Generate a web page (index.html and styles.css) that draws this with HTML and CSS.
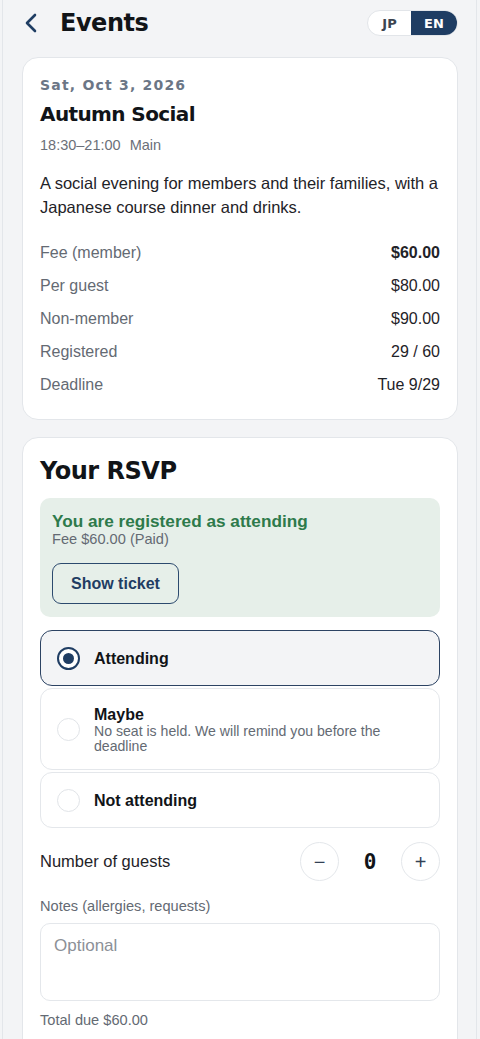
FILE: index.html
```html
<!DOCTYPE html>
<html lang="en">
<head>
  <meta charset="UTF-8" />
  <meta name="viewport" content="width=device-width, initial-scale=1.0" />
  <title>Events</title>
  <link rel="stylesheet" href="styles.css">
</head>
<body>
  <div class="app">
    <header class="header">
      <a class="back" href="#" aria-label="Back">
        <svg width="14" height="20" viewBox="0 0 14 20"><path d="M11 2 L3 10 L11 18" fill="none" stroke="#1f3d63" stroke-width="2.6" stroke-linecap="round" stroke-linejoin="round"/></svg>
      </a>
      <h1 class="page-title">Events</h1>
      <div class="lang">
        <button class="lang-btn">JP</button>
        <button class="lang-btn active">EN</button>
      </div>
    </header>

    <section class="card event">
      <div class="event-date">Sat, Oct 3, 2026</div>
      <h2 class="event-title">Autumn Social</h2>
      <div class="event-meta">18:30–21:00<span class="venue">Main</span></div>
      <p class="event-desc">A social evening for members and their families, with a Japanese course dinner and drinks.</p>
      <dl class="facts">
        <div class="fact"><dt>Fee (member)</dt><dd class="strong">$60.00</dd></div>
        <div class="fact"><dt>Per guest</dt><dd>$80.00</dd></div>
        <div class="fact"><dt>Non-member</dt><dd>$90.00</dd></div>
        <div class="fact"><dt>Registered</dt><dd>29 / 60</dd></div>
        <div class="fact"><dt>Deadline</dt><dd>Tue 9/29</dd></div>
      </dl>
    </section>

    <section class="card rsvp">
      <h2 class="rsvp-title">Your RSVP</h2>

      <div class="status">
        <div class="status-title">You are registered as attending</div>
        <div class="status-fee">Fee $60.00 (Paid)</div>
        <button class="ticket-btn">Show ticket</button>
      </div>

      <div class="options">
        <label class="option selected">
          <span class="radio"></span>
          <span class="option-text"><span class="option-name">Attending</span></span>
        </label>
        <label class="option">
          <span class="radio"></span>
          <span class="option-text">
            <span class="option-name">Maybe</span>
            <span class="option-note">No seat is held. We will remind you before the deadline</span>
          </span>
        </label>
        <label class="option">
          <span class="radio"></span>
          <span class="option-text"><span class="option-name">Not attending</span></span>
        </label>
      </div>

      <div class="guests">
        <span class="guests-label">Number of guests</span>
        <div class="stepper">
          <button class="step">−</button>
          <span class="step-value">0</span>
          <button class="step">+</button>
        </div>
      </div>

      <label class="notes-label" for="notes">Notes (allergies, requests)</label>
      <textarea id="notes" class="notes" placeholder="Optional"></textarea>

      <div class="total">Total due $60.00</div>
    </section>
  </div>
</body>
</html>
```

FILE: styles.css
```css
* {
  box-sizing: border-box;
}
body {
  margin: 0;
  padding: 0;
  background: #f3f4f6;
  font-family: "Liberation Sans", Arial, sans-serif;
  color: #1f2328;
}
.app {
  margin: 0 3px 0 2px;
  padding: 0 18px 40px 19px;
  border-left: 1px solid #e3e6ea;
  border-right: 1px solid #e3e6ea;
  min-height: 1039px;
}
.header {
  height: 46px;
  display: flex;
  align-items: center;
  margin-bottom: 11px;
}
.back {
  display: flex;
  width: 14px;
  margin-left: 2px;
}
.page-title {
  margin: 0 0 0 22px;
  font-family: "DejaVu Sans", sans-serif;
  font-size: 24px;
  letter-spacing: -0.02em;
  font-weight: 700;
  color: #111418;
  flex: 1;
}
.lang {
  display: flex;
  height: 26px;
  border: 1px solid #e2e5e9;
  border-radius: 999px;
  overflow: hidden;
  background: #fff;
}
.lang-btn {
  border: none;
  background: none;
  font-family: "DejaVu Sans", sans-serif;
  font-weight: 700;
  font-size: 13px;
  color: #3d4450;
  width: 43px;
  padding: 0;
}
.lang-btn.active {
  background: #1f3d63;
  color: #fff;
  width: 46px;
}
.card {
  background: #fff;
  border: 1px solid #e3e6ea;
  border-radius: 16px;
}
.event {
  padding: 19px 17px 18px;
  margin-bottom: 17px;
}
.event-date {
  font-family: "DejaVu Sans", sans-serif;
  font-weight: 700;
  font-size: 14px;
  line-height: 17px;
  letter-spacing: 1.2px;
  color: #6b7686;
}
.event-title {
  margin: 8px 0 0;
  font-family: "DejaVu Sans", sans-serif;
  font-size: 20px;
  line-height: 24px;
  letter-spacing: -0.03em;
  color: #111418;
}
.event-meta {
  margin-top: 11px;
  font-size: 14.5px;
  line-height: 17px;
  color: #6b7079;
}
.venue {
  margin-left: 9px;
}
.event-desc {
  margin: 17px 0 0;
  font-size: 16.5px;
  line-height: 24px;
  color: #1f2328;
}
.facts {
  margin: 17px 0 0;
}
.fact {
  display: flex;
  justify-content: space-between;
  font-size: 16px;
  line-height: 33px;
}
.fact dt {
  color: #646a73;
}
.fact dd {
  margin: 0;
  color: #1f2328;
}
.fact dd.strong {
  font-weight: 700;
}
.rsvp {
  padding: 19px 17px 30px;
}
.rsvp-title {
  margin: 0;
  font-family: "DejaVu Sans", sans-serif;
  font-size: 24px;
  line-height: 28px;
  letter-spacing: -0.02em;
  color: #111418;
}
.status {
  margin-top: 13px;
  background: #e6efe9;
  border-radius: 10px;
  padding: 13px 12px 13px;
}
.status-title {
  font-size: 17.2px;
  line-height: 20px;
  font-weight: 700;
  color: #2e7a4b;
}
.status-fee {
  font-size: 14.6px;
  line-height: 17px;
  color: #646a73;
}
.ticket-btn {
  margin-top: 15px;
  height: 41px;
  padding: 0 18px;
  border: 1.5px solid #2c4a6e;
  border-radius: 9px;
  background: transparent;
  font-family: "Liberation Sans", Arial, sans-serif;
  font-weight: 700;
  font-size: 16px;
  color: #1f3d63;
}
.options {
  margin-top: 13px;
  display: flex;
  flex-direction: column;
  gap: 2px;
}
.option {
  display: flex;
  align-items: center;
  gap: 14px;
  padding: 15.5px 16px;
  border: 1.5px solid #e4e7eb;
  border-radius: 12px;
  background: #fff;
}
.option.selected {
  border-color: #2c4363;
  background: #f3f4f6;
}
.radio {
  flex: none;
  width: 23px;
  height: 23px;
  border: 1.5px solid #e1e4e8;
  border-radius: 50%;
  background: #fff;
  display: flex;
  align-items: center;
  justify-content: center;
}
.option.selected .radio {
  border: 2px solid #1f3d63;
}
.option.selected .radio::after {
  content: "";
  width: 11px;
  height: 11px;
  border-radius: 50%;
  background: #1f3d63;
}
.option-text {
  display: flex;
  flex-direction: column;
}
.option-name {
  font-size: 16px;
  line-height: 19px;
  font-weight: 700;
  color: #111418;
}
.option-note {
  font-size: 14.1px;
  line-height: 15px;
  color: #646a73;
}
.guests {
  margin-top: 14px;
  display: flex;
  align-items: center;
  justify-content: space-between;
}
.guests-label {
  font-size: 16.5px;
  color: #1f2328;
}
.stepper {
  display: flex;
  align-items: center;
  gap: 12px;
}
.step {
  width: 39px;
  height: 39px;
  border: 1.5px solid #e4e7eb;
  border-radius: 50%;
  background: #fff;
  font-family: "Liberation Sans", Arial, sans-serif;
  font-size: 20px;
  line-height: 1;
  color: #334155;
  padding: 0;
}
.step-value {
  width: 38px;
  text-align: center;
  font-family: "DejaVu Sans Mono", monospace;
  font-weight: 700;
  font-size: 21px;
  color: #111418;
}
.notes-label {
  display: block;
  margin-top: 17px;
  font-size: 14.6px;
  line-height: 17px;
  color: #646a73;
}
.notes {
  display: block;
  width: 100%;
  height: 78px;
  margin-top: 8px;
  padding: 12px 13px;
  border: 1.5px solid #e4e7eb;
  border-radius: 10px;
  resize: none;
  font-family: "Liberation Sans", Arial, sans-serif;
  font-size: 17px;
  line-height: 20px;
  color: #1f2328;
}
.notes::placeholder {
  color: #8c9097;
}
.total {
  margin-top: 11px;
  font-size: 14.6px;
  line-height: 17px;
  color: #646a73;
}
```
